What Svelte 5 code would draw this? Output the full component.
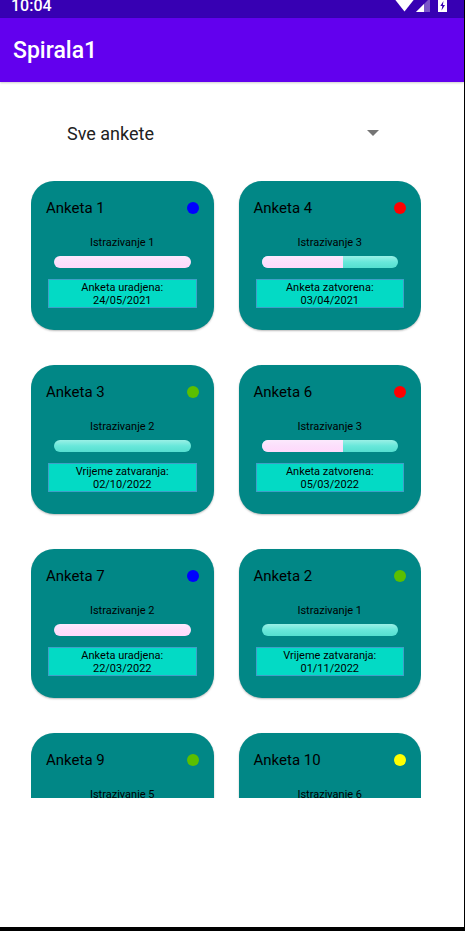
<script>
  const filters = ['Sve ankete', 'Sve moje ankete', 'Urađene ankete', 'Buduće ankete', 'Prošle ankete'];
  let selected = $state('Sve ankete');

  const surveys = [
    { name: 'Anketa 1', research: 'Istrazivanje 1', progress: 100, color: '#0000ff', status: 'Anketa uradjena:', date: '24/05/2021' },
    { name: 'Anketa 4', research: 'Istrazivanje 3', progress: 60, color: '#ff0000', status: 'Anketa zatvorena:', date: '03/04/2021' },
    { name: 'Anketa 3', research: 'Istrazivanje 2', progress: 0, color: '#5bbf00', status: 'Vrijeme zatvaranja:', date: '02/10/2022' },
    { name: 'Anketa 6', research: 'Istrazivanje 3', progress: 60, color: '#ff0000', status: 'Anketa zatvorena:', date: '05/03/2022' },
    { name: 'Anketa 7', research: 'Istrazivanje 2', progress: 100, color: '#0000ff', status: 'Anketa uradjena:', date: '22/03/2022' },
    { name: 'Anketa 2', research: 'Istrazivanje 1', progress: 0, color: '#5bbf00', status: 'Vrijeme zatvaranja:', date: '01/11/2022' },
    { name: 'Anketa 9', research: 'Istrazivanje 5', progress: 0, color: '#5bbf00', status: 'Vrijeme zatvaranja:', date: '10/12/2022' },
    { name: 'Anketa 10', research: 'Istrazivanje 6', progress: 0, color: '#ffff00', status: 'Vrijeme aktiviranja:', date: '10/12/2022' }
  ];
</script>

<div class="screen">
  <div class="status-bar">
    <span class="clock">10:04</span>
    <svg class="status-icons" width="54" height="18" viewBox="0 0 54 18" aria-hidden="true">
      <path d="M-2 -3H21L9.500 11.500Z" fill="#fff" />
      <path d="M35 -2V12H21Z" fill="#7a55c8" />
      <path d="M29 4V12H21Z" fill="#fff" />
      <path d="M43 0H52V12H43Z" fill="#fff" />
      <path d="M48.500 1L45.300 6H47.300L46.500 10.500L50 5H47.900Z" fill="#3700b3" />
    </svg>
  </div>
  <header><h1>Spirala1</h1></header>
  <main>
    <div class="filter">
      <select aria-label="Filter anketa" bind:value={selected}>
        {#each filters as filter}
          <option>{filter}</option>
        {/each}
      </select>
      <svg class="arrow" width="12" height="6" viewBox="0 0 12 6" aria-hidden="true">
        <path d="M0 0H12L6 6Z" fill="#757575" />
      </svg>
    </div>
    <div class="list">
      {#each surveys as survey}
        <article>
          <div class="top">
            <h2>{survey.name}</h2>
            <span class="dot" style="background: {survey.color}"></span>
          </div>
          <p class="research">{survey.research}</p>
          <progress max="100" value={survey.progress} aria-label={survey.name}></progress>
          <p class="date">{survey.status}<br />{survey.date}</p>
        </article>
      {/each}
    </div>
  </main>
</div>

<style>
  .screen {
    box-sizing: border-box;
    height: 100vh;
    display: flex;
    flex-direction: column;
    border-right: 1px solid #000;
    border-bottom: 4px solid #000;
    background: #fff;
    color: #000;
    font-family: Roboto, sans-serif;
    overflow: hidden;
  }
  .status-bar {
    flex: none;
    height: 18px;
    display: flex;
    justify-content: space-between;
    padding: 0 15px 0 11px;
    overflow: hidden;
    background: #3700b3;
  }
  .clock {
    color: #fff;
    font-size: 16px;
    font-weight: 500;
    line-height: 12px;
  }
  header {
    flex: none;
    height: 64px;
    display: flex;
    align-items: center;
    padding-left: 13px;
    background: #6200ee;
    box-shadow: 0 1px 2px #0003;
  }
  h1,
  h2,
  p {
    margin: 0;
  }
  h1 {
    color: #fff;
    font-size: 23px;
    font-weight: 500;
    line-height: 28px;
    padding-top: 2px;
  }
  main {
    flex: 1;
    min-height: 0;
    display: flex;
    flex-direction: column;
    padding: 31px 43px 129px 31px;
  }
  .filter {
    flex: none;
    height: 40px;
    display: grid;
    align-items: center;
    margin: 0 42px 28px 36px;
  }
  select,
  .arrow {
    grid-area: 1 / 1;
  }
  select {
    appearance: none;
    width: 100%;
    height: 40px;
    padding: 0;
    border: 0;
    background: transparent;
    color: #212121;
    font: 18px Roboto, sans-serif;
  }
  .arrow {
    justify-self: end;
    pointer-events: none;
  }
  .list {
    flex: 1;
    min-height: 0;
    display: grid;
    grid-template-columns: 1fr 1fr;
    grid-auto-rows: max-content;
    gap: 35px 25px;
    overflow-y: auto;
    scrollbar-width: none;
  }
  article {
    box-sizing: border-box;
    height: 149px;
    display: flex;
    flex-direction: column;
    padding: 17px 15px 0;
    border-radius: 23px;
    background: #018786;
    box-shadow: 0 1px 2px #0004;
  }
  .top {
    display: flex;
    align-items: center;
    justify-content: space-between;
    height: 20px;
  }
  h2 {
    font-size: 15px;
    font-weight: 400;
    line-height: 20px;
  }
  .dot {
    width: 12px;
    height: 12px;
    border-radius: 50%;
  }
  .research {
    margin-top: 18px;
    font-size: 11px;
    line-height: 14px;
    text-align: center;
  }
  progress {
    appearance: none;
    display: block;
    width: auto;
    height: 12px;
    margin: 6px 8px 0;
    border: 0;
    border-radius: 6px;
    overflow: hidden;
    background: transparent;
  }
  progress::-webkit-progress-bar {
    background: linear-gradient(#9af0e6, #68e7da 50%, #55dfd0);
  }
  progress::-webkit-progress-value {
    background: linear-gradient(#fce9fd, #fcdffc 50%, #ffd9fb);
  }
  .date {
    margin: 11px 2px 0;
    border: 1px solid #3f9fc8;
    background: #03dac5;
    font-size: 11px;
    line-height: 13px;
    padding-top: 1px;
    text-align: center;
  }
</style>
